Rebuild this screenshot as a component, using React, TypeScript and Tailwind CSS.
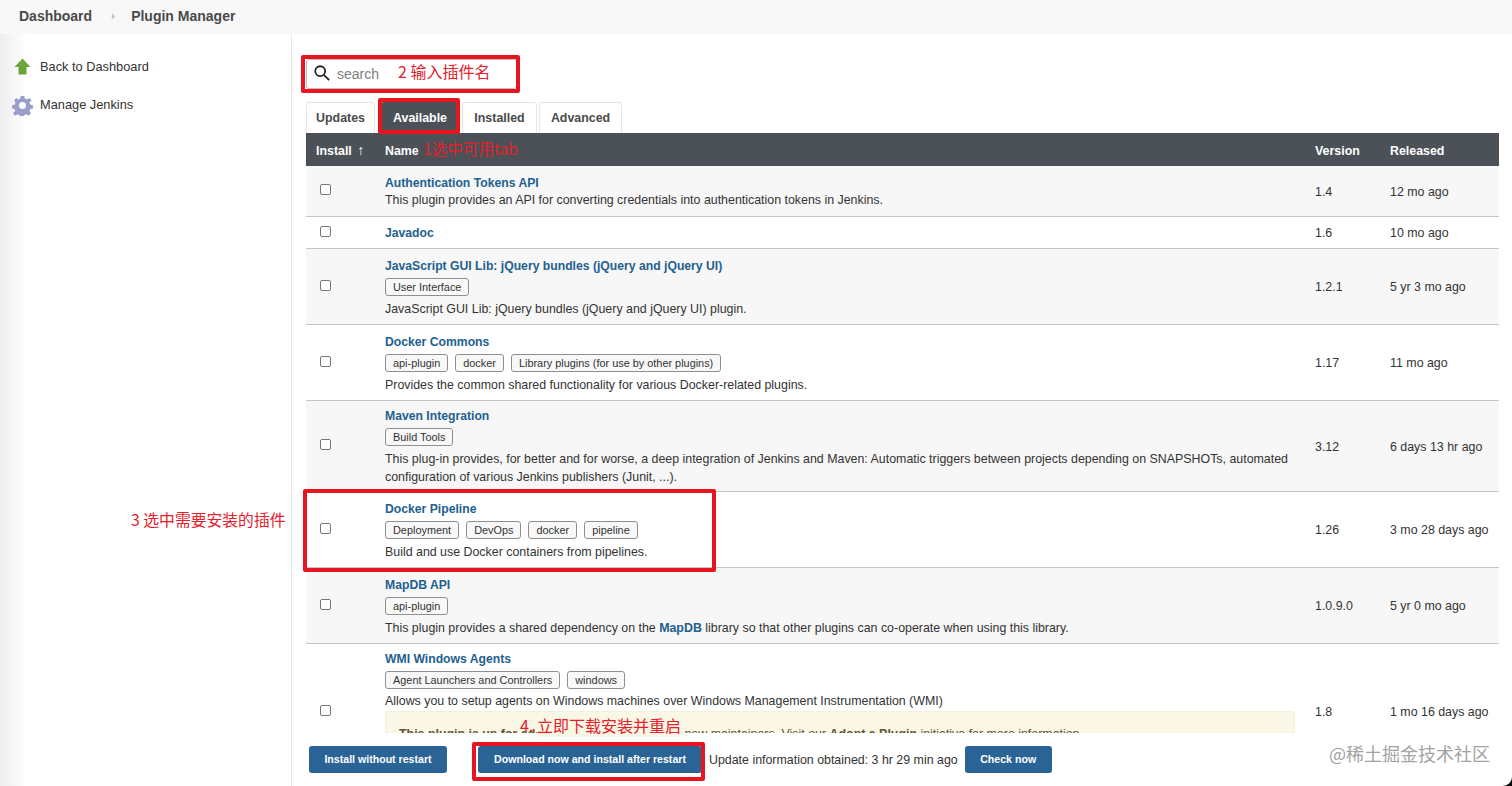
import React from "react";

type Plugin = {
  name: string;
  tags?: string[];
  desc: React.ReactNode;
  version: string;
  released: string;
  h: string;
  alt?: boolean;
  extra?: boolean;
};

const plugins: Plugin[] = [
  { name: "Authentication Tokens API", desc: "This plugin provides an API for converting credentials into authentication tokens in Jenkins.", version: "1.4", released: "12 mo ago", h: "h-[50px]", alt: true },
  { name: "Javadoc", desc: "", version: "1.6", released: "10 mo ago", h: "h-[32px]" },
  { name: "JavaScript GUI Lib: jQuery bundles (jQuery and jQuery UI)", tags: ["User Interface"], desc: "JavaScript GUI Lib: jQuery bundles (jQuery and jQuery UI) plugin.", version: "1.2.1", released: "5 yr 3 mo ago", h: "h-[76px]", alt: true },
  { name: "Docker Commons", tags: ["api-plugin", "docker", "Library plugins (for use by other plugins)"], desc: "Provides the common shared functionality for various Docker-related plugins.", version: "1.17", released: "11 mo ago", h: "h-[76px]" },
  { name: "Maven Integration", tags: ["Build Tools"], desc: "This plug-in provides, for better and for worse, a deep integration of Jenkins and Maven: Automatic triggers between projects depending on SNAPSHOTs, automated configuration of various Jenkins publishers (Junit, ...).", version: "3.12", released: "6 days 13 hr ago", h: "h-[91px]", alt: true },
  { name: "Docker Pipeline", tags: ["Deployment", "DevOps", "docker", "pipeline"], desc: "Build and use Docker containers from pipelines.", version: "1.26", released: "3 mo 28 days ago", h: "h-[76px]" },
  { name: "MapDB API", tags: ["api-plugin"], desc: <>This plugin provides a shared dependency on the <b className="font-bold text-[#22608f]">MapDB</b> library so that other plugins can co-operate when using this library.</>, version: "1.0.9.0", released: "5 yr 0 mo ago", h: "h-[76px]", alt: true },
  { name: "WMI Windows Agents", tags: ["Agent Launchers and Controllers", "windows"], desc: "Allows you to setup agents on Windows machines over Windows Management Instrumentation (WMI)", version: "1.8", released: "1 mo 16 days ago", h: "h-[136px]", extra: true },
];

const tabs = [
  { label: "Updates", cls: "w-[69px] border-[#e5e5e5] text-[#4a4a4a]" },
  { label: "Available", cls: "ml-[6px] w-[78px] border-[#4b5157] bg-[#4b5157] text-white" },
  { label: "Installed", cls: "ml-[3px] w-[75px] border-[#e5e5e5] text-[#4a4a4a]" },
  { label: "Advanced", cls: "ml-[2px] w-[83px] border-[#e5e5e5] text-[#4a4a4a]" },
];

function Tag({ children }: { children: React.ReactNode }) {
  return (
    <span className="inline-block h-[18px] rounded-[3px] border border-[#8f8f8f] bg-[#f8f8f8] px-[7px] text-[10.9px] leading-[16px] text-[#333]">
      {children}
    </span>
  );
}

function Note({ className, children }: { className: string; children: React.ReactNode }) {
  return (
    <span className={`absolute whitespace-nowrap text-[#e5202c] ${className}`} style={{ fontFamily: '"Noto Sans CJK SC", sans-serif' }}>
      {children}
    </span>
  );
}

function Box({ className }: { className: string }) {
  return <div className={`pointer-events-none absolute rounded-[2px] border-[4px] border-[#e8141f] ${className}`} />;
}

function PluginRow({ p }: { p: Plugin }) {
  return (
    <tr className={`${p.h} border-b border-[#c4c4c4] align-middle ${p.alt ? "bg-[#f7f7f7]" : "bg-white"}`}>
      <td className="pl-[14px]">
        <div className="mb-[2px] h-[11px] w-[11px] rounded-[2px] border border-[#767676] bg-white" />
      </td>
      <td className={`pl-[10px] pr-[10px] ${p.extra ? "pt-[6px] align-top" : "pt-[2px]"}`}>
        <a className="block text-[12.2px] font-bold leading-[18px] text-[#22608f]">{p.name}</a>
        {p.tags && (
          <div className="mt-[3px] flex gap-[7px]">
            {p.tags.map((t) => (
              <Tag key={t}>{t}</Tag>
            ))}
          </div>
        )}
        {p.desc && (
          <div className={`${p.tags ? (p.extra ? "mt-[3px]" : "mt-[4px]") : "-mt-[1px]"} text-[12.4px] leading-[18px] text-[#333]`}>
            {p.desc}
          </div>
        )}
        {p.extra && (
          <div className="mt-[1px] h-[60px] rounded-[2px] border border-[#f5f0dc] bg-[#fbf7e6] px-[13px] pt-[13px] text-[12.4px] leading-[18px] text-[#5f5530]">
            <b>This plugin is up for adoption!</b> We are looking for new maintainers. Visit our <b>Adopt a Plugin</b> initiative for more information.
          </div>
        )}
      </td>
      <td className="pl-[10px] pt-[3px] text-[12.4px] text-[#333]">{p.version}</td>
      <td className="pl-[10px] pt-[3px] text-[12.4px] text-[#333]">{p.released}</td>
    </tr>
  );
}

function Btn({ children, className = "" }: { children: React.ReactNode; className?: string }) {
  return (
    <button className={`h-[27px] rounded-[3px] bg-[#2a6496] text-[10.6px] font-bold text-white ${className}`}>
      {children}
    </button>
  );
}

function Gear() {
  return (
    <svg viewBox="0 0 24 24" className="h-[21px] w-[21px]">
      <path
        fill="#9a9dca"
        fillRule="evenodd"
        d="M10 1h4l.6 3 2.400 1 2.600-1.700 2.800 2.800L20 8.700l1 2.400 3 .6v3.600l-3 .6-1 2.400 1.700 2.600-2.800 2.800-2.600-1.700-2.400 1-.6 2.500h-4l-.6-2.500-2.400-1-2.600 1.700-2.800-2.800L3.800 18.300l-1-2.400L0 15.300v-3.600l3-.6 1-2.400-1.700-2.600 2.800-2.800L7 5l2.400-1zM12 8a4 4 0 1 0 0 8 4 4 0 0 0 0-8z"
      />
    </svg>
  );
}

export default function App() {
  return (
    <div className="relative flex h-[786px] w-full flex-col overflow-hidden bg-white text-[#333]" style={{ fontFamily: '"Liberation Sans", Arial, sans-serif' }}>
      <header className="flex h-[34px] shrink-0 items-center bg-[#f8f8f8] pb-[2px] pl-[19px] text-[14px] font-bold text-[#4a4a4a]">
        <span>Dashboard</span>
        <svg viewBox="0 0 6 8" className="ml-[19px] mr-[15px] h-[7px] w-[5px]"><path d="M1 0l4 4-4 4z" fill="#c4c4c4" /></svg>
        <span>Plugin Manager</span>
      </header>
      <div className="flex min-h-0 flex-1">
        <aside className="w-[292px] shrink-0 border-r border-[#e8e8e8] bg-gradient-to-r from-[#ededed] via-white via-[9%] to-white pl-[12px] pt-[22px] text-[12.8px]">
          <div className="flex h-[22px] items-center gap-[8px]">
            <svg viewBox="0 0 20 20" className="h-[20px] w-[20px]">
              <path d="M10.500 1.500l8 8.500h-4v7.500h-8V10h-4z" fill="#6ea53b" />
            </svg>
            <span className="text-[#333]">Back to Dashboard</span>
          </div>
          <div className="mt-[16px] flex h-[22px] items-center gap-[7px]">
            <Gear />
            <span className="text-[#333]">Manage Jenkins</span>
          </div>
        </aside>
        <main className="flex min-w-0 flex-1 flex-col">
          <div className="min-h-0 flex-1 overflow-hidden pl-[14px] pr-[13px] pt-[25px]">
            <div className="flex h-[30px] w-[211px] items-center rounded-[3px] border border-[#bdbdbd] bg-white pl-[6px]">
              <svg viewBox="0 0 20 20" className="mb-[2px] h-[18px] w-[18px]" fill="none" stroke="#222" strokeWidth="2">
                <circle cx="8" cy="8" r="5.500" />
                <path d="M12 12l6 6" />
              </svg>
              <span className="ml-[6px] text-[14px] text-[#808080]">search</span>
            </div>
            <div className="mt-[13px] flex h-[31px] items-stretch">
              {tabs.map((t) => (
                <div
                  key={t.label}
                  className={`flex items-center justify-center rounded-t-[3px] border border-b-0 text-[12.4px] font-bold ${t.cls}`}
                >
                  {t.label}
                </div>
              ))}
            </div>
            <table className="w-full table-fixed border-collapse">
              <colgroup>
                <col className="w-[69px]" />
                <col />
                <col className="w-[75px]" />
                <col className="w-[119px]" />
              </colgroup>
              <thead>
                <tr className="h-[33px] bg-[#4b5157] text-left text-[12.4px] font-bold text-white">
                  <th className="pl-[10px] pt-[1px]">Install <span className="ml-[2px] text-[14px] font-normal">↑</span></th>
                  <th className="pl-[10px] pt-[3px]">Name</th>
                  <th className="pl-[10px] pt-[3px]">Version</th>
                  <th className="pl-[10px] pt-[3px]">Released</th>
                </tr>
              </thead>
              <tbody>
                {plugins.map((p) => (
                  <PluginRow key={p.name} p={p} />
                ))}
              </tbody>
            </table>
          </div>
          <div className="flex h-[53px] shrink-0 items-start bg-white pl-[17px] pt-[13px]">
            <Btn className="w-[138px]">Install without restart</Btn>
            <Btn className="ml-[31px] w-[224px]">Download now and install after restart</Btn>
            <span className="ml-[7px] mt-[5px] text-[12.4px] text-[#333]">Update information obtained: 3 hr 29 min ago</span>
            <Btn className="ml-[7px] w-[87px]">Check now</Btn>
          </div>
        </main>
      </div>

      <Box className="left-[301px] top-[55px] h-[38px] w-[219px]" />
      <Box className="left-[378px] top-[98px] h-[36px] w-[82px]" />
      <Box className="left-[303px] top-[489px] h-[83px] w-[413px]" />
      <Box className="left-[472px] top-[742px] h-[39px] w-[233px]" />

      <Note className="left-[398px] top-[60px] text-[16px] leading-[22px]">2 输入插件名</Note>
      <Note className="left-[423px] top-[138px] text-[15.6px] leading-[20px] text-[#c8202c]">1选中可用tab</Note>
      <Note className="left-[131px] top-[510px] text-[15.8px] leading-[20px]">3 选中需要安装的插件</Note>
      <Note className="left-[520px] top-[715px] text-[16px] leading-[20px]">4. <span className="bg-[#fbf7e6]">立即下载安装并重启</span></Note>
      <span className="absolute left-[1329px] top-[741px] text-[18px] leading-[24px] text-[#a3a3a3]" style={{ fontFamily: '"Noto Sans CJK SC", sans-serif' }}>@稀土掘金技术社区</span>
      <svg viewBox="0 0 9 9" className="absolute bottom-0 right-0 h-[9px] w-[9px]">
        <path d="M9 0v9H0a9 9 0 0 0 9-9z" fill="#000" />
      </svg>
    </div>
  );
}
